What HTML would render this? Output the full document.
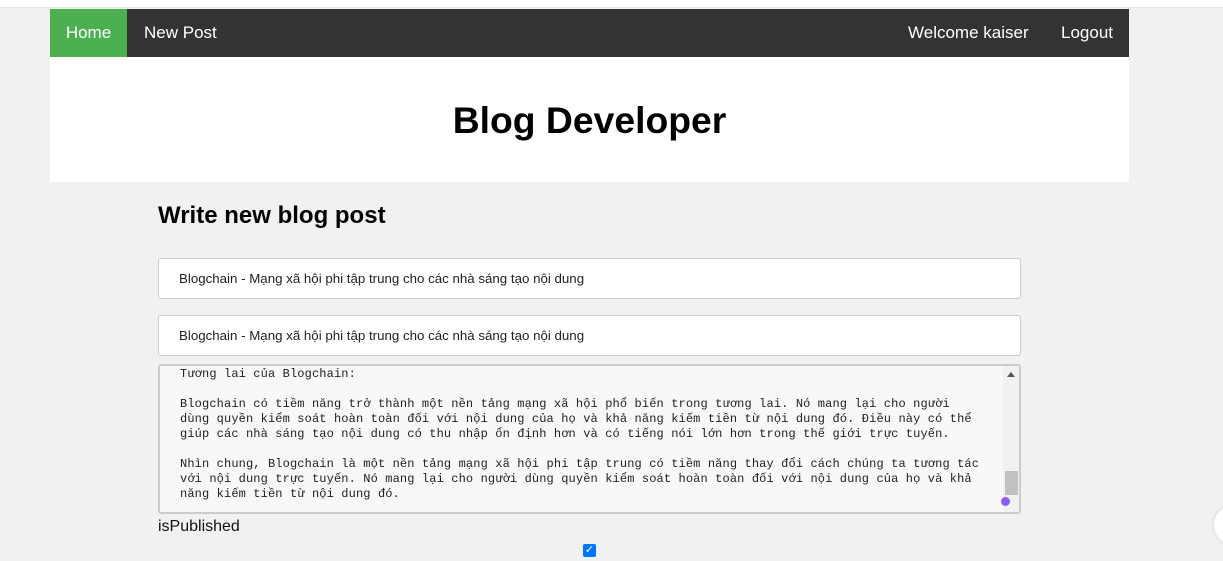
<!DOCTYPE html>
<html><head><meta charset="utf-8"><style>
*{box-sizing:border-box;margin:0;padding:0}
body{width:1223px;height:561px;overflow:hidden;background:#f1f1f1;font-family:"Liberation Sans",Arial,sans-serif;position:relative}
.top{position:absolute;left:0;top:0;width:1223px;height:8px;background:#fff;border-bottom:1px solid #e4e4e4}
.nav{position:absolute;left:50px;top:9px;width:1079px;height:48px;background:#333;color:#fff;font-size:17px}
.nav a{position:absolute;top:0;height:48px;line-height:47px;color:#fff}
.hdr{position:absolute;left:50px;top:57px;width:1079px;height:125px;background:#fff;text-align:center}
.hdr h1{font-size:37.3px;line-height:38px;padding-top:44px;font-weight:bold}
h2{position:absolute;left:158px;top:202px;font-size:24px;font-weight:bold}
.in{position:absolute;left:158px;width:863px;height:41px;background:#fff;border:1px solid #ccc;border-radius:3px;font-size:13.3px;padding-left:20px;line-height:39px;color:#222}
.ta{position:absolute;left:158px;top:364px;width:863px;height:150px;background:#f8f8f8;border:2px solid #ccc;border-radius:3px;overflow:hidden}
.txt{position:absolute;left:20px;top:1px;font-family:"Liberation Mono",monospace;font-size:12px;letter-spacing:0.13px;line-height:15px;white-space:pre;color:#222}
.sb{position:absolute;right:0;top:0;width:16px;height:146px;background:#f1f1f1}
</style></head><body>
<div class="top"></div>
<div class="nav">
<a style="left:0;width:77px;background:#4caf50;text-align:center">Home</a>
<a style="left:94px">New Post</a>
<a style="left:858px">Welcome kaiser</a>
<a style="left:1011px">Logout</a>
</div>
<div class="hdr"><h1>Blog Developer</h1></div>
<h2>Write new blog post</h2>
<div class="in" style="top:258px">Blogchain - Mạng xã hội phi tập trung cho các nhà sáng tạo nội dung</div>
<div class="in" style="top:315px">Blogchain - Mạng xã hội phi tập trung cho các nhà sáng tạo nội dung</div>
<div class="ta"><div class="txt">Tương lai của Blogchain:

Blogchain có tiềm năng trở thành một nền tảng mạng xã hội phổ biến trong tương lai. Nó mang lại cho người
dùng quyền kiểm soát hoàn toàn đối với nội dung của họ và khả năng kiếm tiền từ nội dung đó. Điều này có thể
giúp các nhà sáng tạo nội dung có thu nhập ổn định hơn và có tiếng nói lớn hơn trong thế giới trực tuyến.

Nhìn chung, Blogchain là một nền tảng mạng xã hội phi tập trung có tiềm năng thay đổi cách chúng ta tương tác
với nội dung trực tuyến. Nó mang lại cho người dùng quyền kiểm soát hoàn toàn đối với nội dung của họ và khả
năng kiếm tiền từ nội dung đó.</div>
<div class="sb">
<div style="position:absolute;left:4px;top:6px;width:0;height:0;border-left:4px solid transparent;border-right:4px solid transparent;border-bottom:5px solid #555"></div>
<div style="position:absolute;left:2px;top:105px;width:13px;height:24px;background:#c1c1c1"></div>
<div style="position:absolute;left:-2px;top:131px;width:9px;height:9px;border-radius:50%;background:#8b5cf6"></div>
</div></div>
<div style="position:absolute;left:158px;top:518px;font-size:16px;color:#111">isPublished</div>
<div style="position:absolute;left:583px;top:544px;width:13px;height:13px;background:#0075ff;border-radius:2px;color:#fff;font-size:11px;line-height:13px;text-align:center">✓</div>
<div style="position:absolute;left:1214px;top:505px;width:40px;height:40px;border-radius:50%;background:#fff;box-shadow:0 0 4px rgba(0,0,0,.15)"></div>
</body></html>
